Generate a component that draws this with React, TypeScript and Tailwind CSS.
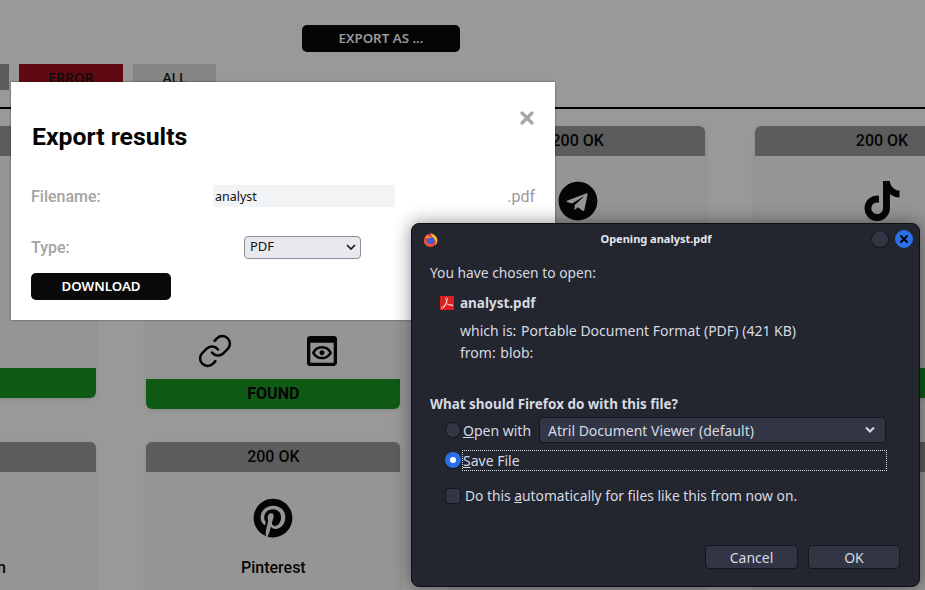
import React from "react";
import { Link } from "lucide-react";
import { FaTelegram, FaTiktok, FaPinterest } from "react-icons/fa";
import { MdOutlinePreview } from "react-icons/md";
import { SiAdobeacrobatreader } from "react-icons/si";
import { FiX } from "react-icons/fi";

function Card({ status, children, bar, h }: { status?: string; children?: React.ReactNode; bar?: string; h: string }) {
  return (
    <div className={`relative flex flex-col rounded-[6px] bg-[#959595] shadow-[0_1px_4px_rgba(0,0,0,0.12)] ${h}`}>
      <div className="flex h-[30px] shrink-0 items-center justify-center rounded-t-[6px] bg-[#5c5c5c] text-[16px] font-medium text-[#050505]">
        {status}
      </div>
      <div className="flex min-h-0 flex-1 flex-col items-center">{children}</div>
      {bar !== undefined && (
        <div className="flex h-[30px] shrink-0 items-center justify-center rounded-b-[6px] bg-[#0f5a15] text-[16px] font-bold text-[#050505]">
          {bar}
        </div>
      )}
    </div>
  );
}

function Firefox() {
  return (
    <svg width="15" height="15" viewBox="0 0 15 15" aria-hidden="true">
      <circle cx="7.500" cy="8.200" r="6.700" fill="#e63b3f" />
      <path d="M8.500 0.400c0.300 1.500 2 2 3.400 3.300 1.800 1.700 2.800 3.800 2.300 6-.3 1.500-1.100 2.800-2.300 3.600 1.200-1.600 1.200-3.400.4-4.800C11.500 6.500 9.400 5.800 8.700 4.200 8.300 3 8.200 1.600 8.500 0.400Z" fill="#fbc02d" />
      <circle cx="7.500" cy="8.300" r="3.900" fill="#3f5fd8" />
      <path d="M2.700 5.200c0.300-1.200 1-1.900 1.800-2.300 0 .8.400 1.300 1 1.600 1.600-.3 3.200.4 4.200 1.700-1.400-.6-3.200-.4-4.600.4-.8.400-1.800-.4-2.400-1.400Z" fill="#fb8a2a" />
      <path d="M0.900 8.200c0.200 3.500 3 6 6.600 6 2.300 0 4.200-1 5.400-2.700-1.600 1.200-3.600 1.500-5.500 1-2.300-.6-4-2-4.800-4.300H0.900Z" fill="#f25c2e" />
    </svg>
  );
}

function Radio({ on }: { on?: boolean }) {
  return on ? (
    <span className="flex h-[16px] w-[16px] shrink-0 items-center justify-center rounded-full bg-[#2a6fe8] shadow-[0_1px_0_#14161d]">
      <span className="h-[6px] w-[6px] rounded-full bg-white" />
    </span>
  ) : (
    <span className="h-[16px] w-[16px] shrink-0 rounded-full border border-[#14161d] bg-[#323644]" />
  );
}

export default function App() {
  return (
    <div className="relative h-[590px] w-[925px] overflow-hidden bg-[#999999] font-['Roboto',sans-serif]">
      {/* Page under the overlay */}
      <div className="flex h-[64px] items-start pl-[302px] pt-[25px]">
        <button className="flex h-[27px] w-[158px] items-center justify-center rounded-[5px] bg-[#050505] pt-[1px] font-['Noto_Sans',sans-serif] text-[13.300px] font-semibold text-[#999999]">
          EXPORT AS ...
        </button>
      </div>
      <div className="ml-[-95px] flex h-[45px] items-start gap-[10px] border-b-2 border-black">
        <div className="h-[26px] w-[104px] bg-[#5c5c5c]" />
        <div className="flex h-[26px] w-[104px] items-center justify-center bg-[#5f0a13] font-['Noto_Sans',sans-serif] text-[14px] font-medium text-[#0a0a0a]">
          ERROR
        </div>
        <div className="flex h-[26px] w-[83px] items-center justify-center bg-[#858585] font-['Noto_Sans',sans-serif] text-[14px] font-medium text-[#0a0a0a]">
          ALL
        </div>
      </div>
      <div className="ml-[-158px] mt-[17px] grid w-[1300px] grid-cols-[254px_254px_254px_254px] items-start gap-x-[50.330px] gap-y-[33px]">
        <Card h="h-[272px]" status="200 OK" bar="FOUND" />
        <Card h="h-[283px]" status="200 OK" bar="FOUND">
          <div className="mt-[175px] flex w-full items-center justify-between pl-[51px] pr-[58px] text-[#050505]">
            <Link size={36} strokeWidth={1.700} />
            <MdOutlinePreview size={40} />
          </div>
        </Card>
        <Card h="h-[283px]" status="200 OK">
          <div className="mt-[25px] text-[#050505]">
            <FaTelegram size={40} />
          </div>
        </Card>
        <Card h="h-[272px]" status="200 OK" bar="FOUND">
          <div className="mt-[25px] text-[#050505]">
            <FaTiktok size={40} />
          </div>
        </Card>
        <Card h="h-[160px]" status="200 OK">
          <div className="ml-[2px] mt-[84px] text-[16px] font-medium text-[#050505]">Mastodon</div>
        </Card>
        <Card h="h-[160px]" status="200 OK">
          <div className="mt-[26px] text-[#050505]">
            <FaPinterest size={40} />
          </div>
          <div className="mt-[18px] text-[16px] font-medium text-[#050505]">Pinterest</div>
        </Card>
        <Card h="h-[160px]" status="200 OK" />
        <Card h="h-[160px]" status="200 OK" />
      </div>

      {/* Export modal */}
      <div className="absolute left-[11px] top-[82px] h-[238px] w-[544px] bg-white px-[20px] shadow-[0_0_2px_rgba(0,0,0,0.5)]">
        <div className="flex h-[81px] items-start justify-between pt-[27px]">
          <h2 className="pl-[1px] pt-[1px] text-[24.800px] font-bold leading-[54px] text-[#050505]">Export results</h2>
          <FiX size={20} strokeWidth={4} className="mr-[-2px] mt-[-1px] text-[#aaa7a5]" />
        </div>
        <div className="mt-[22px] flex h-[22px] items-center">
          <label className="w-[182px] pt-[2px] text-[16px] font-medium text-[#a3a3a3]">Filename:</label>
          <div className="flex h-[22px] w-[182px] items-center bg-[#f2f3f5] pl-[2px] pt-[3px] font-['Noto_Sans',sans-serif] text-[12.500px] text-[#111111]">
            analyst
          </div>
          <span className="flex-1 pt-[2px] text-right text-[16px] text-[#9a9a9a]">.pdf</span>
        </div>
        <div className="mt-[28px] flex h-[24px] items-center">
          <label className="w-[213px] pt-[2px] text-[16px] font-medium text-[#a3a3a3]">Type:</label>
          <div className="flex h-[23px] w-[117px] items-center justify-between rounded-[4px] border border-[#8f8b9e] bg-[#e9e8ed] pl-[5px] pr-[4px] font-['Noto_Sans',sans-serif] text-[13px] text-[#111111]">
            PDF
            <svg width="10" height="6" viewBox="0 0 10 6" fill="none" stroke="#111" strokeWidth="1.600"><path d="M1 1l4 4 4-4" /></svg>
          </div>
        </div>
        <button className="mt-[14px] flex h-[27px] w-[140px] items-center justify-center rounded-[5px] bg-[#0a0a0a] font-['Noto_Sans',sans-serif] text-[13.300px] font-semibold text-white">
          DOWNLOAD
        </button>
      </div>

      {/* Firefox dialog */}
      <div className="absolute left-[411px] top-[223px] h-[364px] w-[509px] rounded-[8px] border border-[#0e0f14] bg-[#23252f] font-['Noto_Sans',sans-serif] text-[13.800px] text-[#d6dae2] shadow-[0_0_18px_rgba(0,0,0,0.45)]">
        <div className="flex h-[30px] items-center pl-[11px] pr-[6px]">
          <Firefox />
          <div className="flex-1 pl-[3px] text-center text-[11px] font-bold text-[#e4e7ee]">Opening analyst.pdf</div>
          <span className="h-[18px] w-[18px] rounded-full border border-[#14161d] bg-[#323644]" />
          <span className="ml-[6px] flex h-[18px] w-[18px] items-center justify-center rounded-full bg-[#2a6fe8] text-black">
            <FiX size={12} strokeWidth={4} />
          </span>
        </div>
        <div className="pl-[18px] pt-[9px] leading-[20px]">You have chosen to open:</div>
        <div className="mt-[10px] flex items-center gap-[6px] pl-[28px] leading-[20px]">
          <span className="flex h-[14px] w-[14px] items-center justify-center bg-[#d9201f] text-white">
            <SiAdobeacrobatreader size={12} />
          </span>
          <span className="text-[13.500px] font-bold">analyst.pdf</span>
        </div>
        <div className="mt-[7px] flex flex-col pl-[48px] text-[14px] leading-[22px]">
          <div>which is:&nbsp;<span className="ml-[1px]">Portable Document Format (PDF) (421 KB)</span></div>
          <div>from:&nbsp;<span className="ml-[1px]">blob:</span></div>
        </div>
        <div className="mt-[30px] pl-[18px] text-[13.450px] font-bold leading-[20px]">What should Firefox do with this file?</div>
        <div className="mt-[3px] flex h-[26px] items-center pl-[33px] pr-[33px] text-[14px]">
          <Radio />
          <span className="ml-[2px] w-[76px]"><span className="underline">O</span>pen with</span>
          <div className="flex h-[26px] flex-1 items-center justify-between rounded-[4px] border border-[#14161d] bg-[#323644] pl-[8px] pr-[9px]">
            Atril Document Viewer (default)
            <svg width="12" height="8" viewBox="0 0 12 8" fill="none" stroke="#d6dae2" strokeWidth="2"><path d="M2 1.500l4 4 4-4" /></svg>
          </div>
        </div>
        <div className="mt-[7px] flex h-[20px] items-center pl-[33px] pr-[32px] text-[14px]">
          <Radio on />
          <span className="ml-[1px] flex h-[21px] flex-1 items-center border border-dotted border-[#d6dae2]"><span><span className="underline">S</span>ave File</span></span>
        </div>
        <div className="mt-[16px] flex h-[20px] items-center pl-[33px]">
          <span className="h-[16px] w-[16px] rounded-[3px] border border-[#14161d] bg-[#323644]" />
          <span className="ml-[4px]">Do this <span className="underline">a</span>utomatically for files like this from now on.</span>
        </div>
        <div className="mt-[39px] flex justify-end gap-[10px] pr-[19px] text-[14px]">
          <button className="h-[24px] w-[93px] rounded-[4px] border border-[#14161d] bg-[#323644] text-[#d6dae2]">Cancel</button>
          <button className="h-[24px] w-[92px] rounded-[4px] border border-[#14161d] bg-[#323644] text-[#d6dae2]">OK</button>
        </div>
      </div>
    </div>
  );
}
